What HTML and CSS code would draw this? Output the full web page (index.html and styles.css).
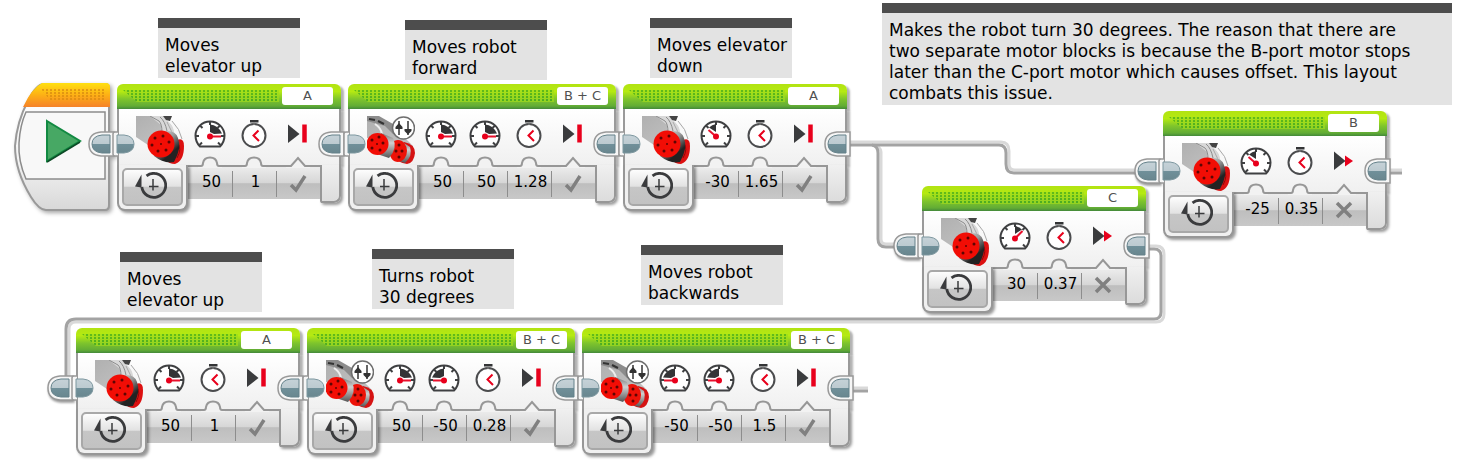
FILE: index.html
```html
<!DOCTYPE html>
<html lang="en">
<head>
<meta charset="utf-8">
<title>Robot program</title>
<link rel="stylesheet" href="styles.css">
</head>
<body>
<svg class="defs" aria-hidden="true">
  <defs>
    <linearGradient id="metal" x1="0" y1="0" x2="1" y2="1"><stop offset="0" stop-color="#b0b0b0"/><stop offset="1" stop-color="#c4c4c4"/></linearGradient>
    <linearGradient id="tube" x1="0" y1="0" x2=".7" y2="1"><stop offset="0" stop-color="#e4e4e4"/><stop offset=".45" stop-color="#9a9a9a"/><stop offset=".8" stop-color="#222"/></linearGradient>
    <linearGradient id="ring" x1="0" y1="0" x2="0" y2="1"><stop offset="0" stop-color="#777"/><stop offset=".4" stop-color="#d0d0d0"/><stop offset="1" stop-color="#555"/></linearGradient>
    <linearGradient id="pill" x1="0" y1="0" x2="0" y2="1"><stop offset="0" stop-color="#c6d2d8"/><stop offset=".5" stop-color="#bccad0"/><stop offset=".5" stop-color="#70909a"/><stop offset="1" stop-color="#6a878f"/></linearGradient>
    <linearGradient id="orange" x1="0" y1="0" x2="0" y2="1"><stop offset="0" stop-color="#ffe010"/><stop offset=".5" stop-color="#fdb015"/><stop offset="1" stop-color="#f5822a"/></linearGradient>
    <linearGradient id="shell" x1="0" y1="0" x2="0" y2="1"><stop offset="0" stop-color="#fff"/><stop offset=".6" stop-color="#f4f4f4"/><stop offset="1" stop-color="#d8d8d8"/></linearGradient>
    <pattern id="dots" width="4" height="3" patternUnits="userSpaceOnUse"><rect width="2" height="2" fill="#d98a10" opacity=".75"/></pattern>
  </defs>
  <symbol id="motor" viewBox="0 0 48 48">
    <path d="M0 0H24L36 10 40 26 24 24 12 29 0 21Z" fill="url(#metal)"/>
    <path d="M14 0H27L37 10 39 22 26 20 25 9Z" fill="#d8d8d8"/>
    <path d="M14 0L23 5Q26 8 26 16M24 1Q29 5 31 15" fill="none" stroke="#8c8c8c"/>
    <path d="M32 4Q39 13 42 24L47 25Q45 13 36 4Z" fill="#f8f8f8"/>
    <path d="M31 6Q35 16 41 23M36 5Q44 13 46 23" fill="none" stroke="#a8a8a8"/>
    <path d="M27 0H36L34 5 30 4Z" fill="#444"/>
    <path d="M41 24Q48 21 48 30Q48 45 39 48Q33 48 30 44Z" fill="#dc1010"/>
    <path d="M42 27Q46 33 41 42" fill="none" stroke="#8c0808"/>
    <path d="M28 15Q40 14 42 22Q46 32 38 46Q28 48 18 40Z" fill="url(#tube)"/>
    <circle cx="25" cy="28" r="13.500" fill="#f20d05"/>
    <g fill="#5c0503"><circle cx="25" cy="28" r="1"/><circle cx="27" cy="20" r="1.500"/><circle cx="19" cy="22" r="1.500"/><circle cx="33" cy="26" r="1.500"/><circle cx="16" cy="29" r="1.500"/><circle cx="22" cy="35" r="1.500"/><circle cx="30" cy="34" r="1.500"/></g>
  </symbol>
  <symbol id="motors" viewBox="0 0 48 48">
    <path d="M0 0H10L30 14 46 30 44 42 20 30 0 22Z" fill="url(#metal)"/>
    <path d="M0 0H12L26 8 34 14 26 18 18 10 0 5Z" fill="#8c8c8c"/>
    <path d="M2 3L8 4M11 5L17 8" stroke="#333" stroke-width="2"/>
    <path d="M8 8Q14 12 15 18" fill="none" stroke="#eee" stroke-width="2"/>
    <path d="M37 26Q48 28 48 37Q47 47 40 48Q30 46 28 42Z" fill="#d51313"/>
    <path d="M34 25L43 31Q46 40 38 47L29 44Z" fill="url(#ring)"/>
    <ellipse cx="31" cy="35" rx="9" ry="11" fill="#ed1208"/>
    <path d="M14 17L26 22Q31 32 22 42L10 38Z" fill="url(#ring)"/>
    <circle cx="10.500" cy="28" r="11" fill="#f20d05"/>
    <g fill="#5c0503"><circle cx="10" cy="28" r="1"/><circle cx="12" cy="21" r="1.500"/><circle cx="5" cy="24" r="1.500"/><circle cx="16" cy="27" r="1.500"/><circle cx="5" cy="32" r="1.500"/><circle cx="13" cy="34" r="1.500"/><circle cx="32" cy="29" r="1.500"/><circle cx="35" cy="35" r="1.500"/><circle cx="29" cy="35" r="1.500"/><circle cx="32" cy="41" r="1.500"/></g>
    <circle cx="36.500" cy="12" r="11" fill="#fff" stroke="#6e6e6e" stroke-width="1.500"/>
    <path d="M32 5V19M41 5V19" stroke="#333" stroke-width="1.500"/>
    <path d="M28.500 11L32 7 35.500 11V13H28.500ZM37.500 13H44.500V15L41 18.500 37.500 15Z" fill="#333"/>
  </symbol>
  <symbol id="dial" viewBox="0 0 32 28">
    <path d="M6 26.500Q1.500 22 1.500 15.500A14.500 14 0 0 1 30.500 15.500Q30.500 22 26 26.500Z" fill="#fff" stroke="#3f4042" stroke-width="2"/>
    <path d="M2 16H5M30 16H27M6 5.500L8.500 8M26 5.500L23.500 8M16 2V5M5.500 25L8 22.500M26.500 25L24 22.500" stroke="#3f4042" stroke-width="2"/>
  </symbol>
  <symbol id="gauge-right" viewBox="0 0 32 28"><use href="#dial"/><path d="M16 4.500Q24 5 28 13.500L20 14 16 12Z" fill="#333436"/><path d="M16 16.500H27" stroke="#e8112d" stroke-width="2"/><circle cx="16" cy="16.500" r="3" fill="#e8001c"/></symbol>
  <symbol id="gauge-left" viewBox="0 0 32 28"><use href="#dial"/><path d="M16 4.500Q8 5 4 13.500L12 14 16 12Z" fill="#333436"/><path d="M16 16.500H5" stroke="#e8112d" stroke-width="2"/><circle cx="16" cy="16.500" r="3" fill="#e8001c"/></symbol>
  <symbol id="gauge-up-left" viewBox="0 0 32 28"><use href="#dial"/><path d="M16 4V12L9 7.500Q12 4.500 16 4Z" fill="#333436"/><path d="M16 16.500L8.500 10" stroke="#e8112d" stroke-width="2"/><circle cx="16" cy="16.500" r="3" fill="#e8001c"/></symbol>
  <symbol id="gauge-up-right" viewBox="0 0 32 28"><use href="#dial"/><path d="M16 4V12L23 7.500Q20 4.500 16 4Z" fill="#333436"/><path d="M16 16.500L23.500 9" stroke="#e8112d" stroke-width="2"/><circle cx="16" cy="16.500" r="3" fill="#e8001c"/></symbol>
  <symbol id="watch" viewBox="0 0 32 28">
    <circle cx="16" cy="15.500" r="11.500" fill="#fff" stroke="#4b4c4e" stroke-width="2"/>
    <path d="M12 1H20.500" stroke="#333436" stroke-width="3"/><path d="M16 2V5" stroke="#888" stroke-width="1"/>
    <path d="M20.500 10.500L15.500 15.500 21 21" fill="none" stroke="#e8001c" stroke-width="2"/>
  </symbol>
  <symbol id="stop" viewBox="0 0 32 28"><path d="M6 4.500L17.500 14 6 23Z" fill="#3a3b3d"/><path d="M22.500 4.500V22.500" stroke="#e8001c" stroke-width="4.500"/></symbol>
  <symbol id="coast" viewBox="0 0 32 28"><path d="M6 4.500L17.500 14 6 23Z" fill="#3a3b3d"/><path d="M17 8.500L25 14 17 19.500Z" fill="#e8001c"/></symbol>
  <symbol id="timer" viewBox="0 0 32 28">
    <path d="M11.500 3.800A12 12 0 1 1 6.800 15" fill="none" stroke="#3a3b3d" stroke-width="2.800"/>
    <path d="M6.500 2.500V15.500L0 14.500Z" fill="#3a3b3d"/>
    <path d="M18 7V18.500M14 14.500H23.500" stroke="#3a3b3d" stroke-width="1.500"/>
  </symbol>
  <symbol id="check" viewBox="0 0 20 20"><path d="M3 12L8 17 17 3" fill="none" stroke="#808080" stroke-width="3.500"/></symbol>
  <symbol id="cross" viewBox="0 0 20 20"><path d="M3 3L17 17M17 3L3 17" stroke="#808080" stroke-width="3.500"/></symbol>
  <symbol id="bump" viewBox="0 0 24 12"><path d="M0 10H3Q5 10 5 7Q6 1.500 12 1.500Q18 1.500 19 7Q19 10 21 10H24V12H0Z" fill="#f2f2f2"/><path d="M0 10H3Q5 10 5 7Q6 1.500 12 1.500Q18 1.500 19 7Q19 10 21 10H24" fill="none" stroke="#979797" stroke-width="2"/></symbol>
  <symbol id="notch" viewBox="0 0 24 12"><path d="M0 10H5L12 2 19 10H24V12H0Z" fill="#f2f2f2"/><path d="M0 10H5L12 2 19 10H24" fill="none" stroke="#979797" stroke-width="2"/></symbol>
  <symbol id="out" viewBox="0 0 28 26">
    <path d="M26 1H13Q1 2 1 13Q1 24 13 25H26Z" fill="#f6f6f6" stroke="#999" stroke-width="1.500"/>
    <path d="M22 4H14Q4 5 4 13Q4 21 14 22H22Z" fill="url(#pill)" stroke="#64818a"/>
  </symbol>
  <symbol id="in" viewBox="0 0 28 26">
    <path d="M6 1H3Q1 1 1 3V23Q1 25 3 25H6" fill="#f6f6f6" stroke="#999" stroke-width="1.500"/>
    <path d="M5 4H12Q22 5 22 13Q22 21 12 22H5Z" fill="url(#pill)" stroke="#7d979f"/>
  </symbol>
</svg>

<main class="canvas">
  <svg class="wires" width="1461" height="463" viewBox="0 0 1461 463" fill="none" aria-hidden="true">
    <g class="wire-light">
      <path d="M874 145Q880 146 881 152V239Q881 244 886 244H898"/>
      <path d="M846 142H1001Q1009 142 1009 151V164Q1009 170 1015 170H1142"/>
      <path d="M1146 246H1156Q1164 246 1164 254V314Q1164 322 1156 322H76Q69 322 69 329V378"/>
      <path d="M1386 170H1402M847 388H868"/>
    </g>
    <g class="wire-dark">
      <path d="M872 145Q878 146 878 153V239Q878 247 886 247H898"/>
      <path d="M846 145H999Q1006 145 1006 153V164Q1006 173 1014 173H1142"/>
      <path d="M1146 249H1154Q1161 249 1161 256V312Q1161 319 1154 319H76Q66 319 66 329V378"/>
      <path d="M1386 173H1402M847 391H868"/>
    </g>
  </svg>

  <p class="note" style="left:158px;top:18px">Moves<br>elevator up</p>
  <p class="note" style="left:405px;top:20px">Moves robot<br>forward</p>
  <p class="note" style="left:650px;top:18px">Moves elevator<br>down</p>
  <p class="note note-wide" style="left:882px;top:3px">Makes the robot turn 30 degrees. The reason that there are two separate motor blocks is because the B-port motor stops later than the C-port motor which causes offset. This layout combats this issue.</p>
  <p class="note" style="left:120px;top:252px">Moves<br>elevator up</p>
  <p class="note" style="left:372px;top:249px">Turns robot<br>30 degrees</p>
  <p class="note" style="left:641px;top:245px">Moves robot<br>backwards</p>

  <div class="chain" style="left:14px;top:83px">
    <div class="start">
      <svg width="97" height="128" viewBox="0 0 97 128" aria-hidden="true">
        <path d="M30 1H91Q95 1 95 5V122Q95 127 91 127H32Q25 127 17 114Q1 88 1 63Q3 38 14 18Q22 1 30 1Z" fill="url(#shell)" stroke="#999" stroke-width="2"/>
        <path d="M28 0H92Q96 0 96 4V24H9Q18 5 28 0Z" fill="url(#orange)"/>
        <path d="M27 6H90V18H36L32 12Z" fill="url(#dots)"/>
        <path d="M12 29H91V96H12Q4 78 5 60Q6 42 12 29Z" fill="#f8f8f8" stroke="#8c8c8c" stroke-width="1.500"/>
        <path d="M33 38L66 58 33 78Z" fill="#47a864" stroke="#128a42" stroke-width="2"/>
        <path d="M33 79L66 59" stroke="#0d4a26" stroke-width="1.500"/>
      </svg>
      <svg class="port port-out" aria-hidden="true"><use href="#out"/></svg>
    </div>
    <section class="block">
      <header class="head"><span class="dots"></span><button class="letter">A</button></header>
      <div class="face"><svg class="motor"><use href="#motor"/></svg><svg class="icon"><use href="#gauge-right"/></svg><svg class="icon"><use href="#watch"/></svg><svg class="icon"><use href="#stop"/></svg></div>
      <div class="base">
        <div class="foot"><button class="mode" aria-label="Mode"><svg><use href="#timer"/></svg></button></div>
        <div class="cell"><svg class="tab"><use href="#bump"/></svg><input aria-label="Power" value="50"></div>
        <div class="cell"><svg class="tab"><use href="#bump"/></svg><input aria-label="Seconds" value="1"></div>
        <div class="cell"><svg class="tab"><use href="#notch"/></svg><button class="brake" aria-label="Brake"><svg><use href="#check"/></svg></button></div>
        <div class="end"></div>
      </div>
      <svg class="port port-in"><use href="#in"/></svg><svg class="port port-out"><use href="#out"/></svg>
    </section>
    <section class="block">
      <header class="head"><span class="dots"></span><button class="letter">B + C</button></header>
      <div class="face"><svg class="motor"><use href="#motors"/></svg><svg class="icon"><use href="#gauge-right"/></svg><svg class="icon"><use href="#gauge-right"/></svg><svg class="icon"><use href="#watch"/></svg><svg class="icon"><use href="#stop"/></svg></div>
      <div class="base">
        <div class="foot"><button class="mode" aria-label="Mode"><svg><use href="#timer"/></svg></button></div>
        <div class="cell"><svg class="tab"><use href="#bump"/></svg><input aria-label="Left power" value="50"></div>
        <div class="cell"><svg class="tab"><use href="#bump"/></svg><input aria-label="Right power" value="50"></div>
        <div class="cell"><svg class="tab"><use href="#bump"/></svg><input aria-label="Seconds" value="1.28"></div>
        <div class="cell"><svg class="tab"><use href="#notch"/></svg><button class="brake" aria-label="Brake"><svg><use href="#check"/></svg></button></div>
        <div class="end"></div>
      </div>
      <svg class="port port-in"><use href="#in"/></svg><svg class="port port-out"><use href="#out"/></svg>
    </section>
    <section class="block">
      <header class="head"><span class="dots"></span><button class="letter">A</button></header>
      <div class="face"><svg class="motor"><use href="#motor"/></svg><svg class="icon"><use href="#gauge-up-left"/></svg><svg class="icon"><use href="#watch"/></svg><svg class="icon"><use href="#stop"/></svg></div>
      <div class="base">
        <div class="foot"><button class="mode" aria-label="Mode"><svg><use href="#timer"/></svg></button></div>
        <div class="cell"><svg class="tab"><use href="#bump"/></svg><input aria-label="Power" value="-30"></div>
        <div class="cell"><svg class="tab"><use href="#bump"/></svg><input aria-label="Seconds" value="1.65"></div>
        <div class="cell"><svg class="tab"><use href="#notch"/></svg><button class="brake" aria-label="Brake"><svg><use href="#check"/></svg></button></div>
        <div class="end"></div>
      </div>
      <svg class="port port-in"><use href="#in"/></svg><svg class="port port-out"><use href="#out"/></svg>
    </section>
  </div>

  <div class="chain" style="left:1163px;top:111px">
    <section class="block">
      <header class="head"><span class="dots"></span><button class="letter">B</button></header>
      <div class="face"><svg class="motor"><use href="#motor"/></svg><svg class="icon"><use href="#gauge-up-left"/></svg><svg class="icon"><use href="#watch"/></svg><svg class="icon"><use href="#coast"/></svg></div>
      <div class="base">
        <div class="foot"><button class="mode" aria-label="Mode"><svg><use href="#timer"/></svg></button></div>
        <div class="cell"><svg class="tab"><use href="#bump"/></svg><input aria-label="Power" value="-25"></div>
        <div class="cell"><svg class="tab"><use href="#bump"/></svg><input aria-label="Seconds" value="0.35"></div>
        <div class="cell"><svg class="tab"><use href="#notch"/></svg><button class="brake" aria-label="Brake"><svg><use href="#cross"/></svg></button></div>
        <div class="end"></div>
      </div>
      <svg class="port port-plug"><use href="#out"/></svg><svg class="port port-in"><use href="#in"/></svg><svg class="port port-out"><use href="#out"/></svg>
    </section>
  </div>

  <div class="chain" style="left:922px;top:186px">
    <section class="block">
      <header class="head"><span class="dots"></span><button class="letter">C</button></header>
      <div class="face"><svg class="motor"><use href="#motor"/></svg><svg class="icon"><use href="#gauge-up-right"/></svg><svg class="icon"><use href="#watch"/></svg><svg class="icon"><use href="#coast"/></svg></div>
      <div class="base">
        <div class="foot"><button class="mode" aria-label="Mode"><svg><use href="#timer"/></svg></button></div>
        <div class="cell"><svg class="tab"><use href="#bump"/></svg><input aria-label="Power" value="30"></div>
        <div class="cell"><svg class="tab"><use href="#bump"/></svg><input aria-label="Seconds" value="0.37"></div>
        <div class="cell"><svg class="tab"><use href="#notch"/></svg><button class="brake" aria-label="Brake"><svg><use href="#cross"/></svg></button></div>
        <div class="end"></div>
      </div>
      <svg class="port port-plug"><use href="#out"/></svg><svg class="port port-in"><use href="#in"/></svg><svg class="port port-out"><use href="#out"/></svg>
    </section>
  </div>

  <div class="chain" style="left:76px;top:328px">
    <section class="block">
      <header class="head"><span class="dots"></span><button class="letter">A</button></header>
      <div class="face"><svg class="motor"><use href="#motor"/></svg><svg class="icon"><use href="#gauge-right"/></svg><svg class="icon"><use href="#watch"/></svg><svg class="icon"><use href="#stop"/></svg></div>
      <div class="base">
        <div class="foot"><button class="mode" aria-label="Mode"><svg><use href="#timer"/></svg></button></div>
        <div class="cell"><svg class="tab"><use href="#bump"/></svg><input aria-label="Power" value="50"></div>
        <div class="cell"><svg class="tab"><use href="#bump"/></svg><input aria-label="Seconds" value="1"></div>
        <div class="cell"><svg class="tab"><use href="#notch"/></svg><button class="brake" aria-label="Brake"><svg><use href="#check"/></svg></button></div>
        <div class="end"></div>
      </div>
      <svg class="port port-plug"><use href="#out"/></svg><svg class="port port-in"><use href="#in"/></svg><svg class="port port-out"><use href="#out"/></svg>
    </section>
    <section class="block">
      <header class="head"><span class="dots"></span><button class="letter">B + C</button></header>
      <div class="face"><svg class="motor"><use href="#motors"/></svg><svg class="icon"><use href="#gauge-right"/></svg><svg class="icon"><use href="#gauge-left"/></svg><svg class="icon"><use href="#watch"/></svg><svg class="icon"><use href="#stop"/></svg></div>
      <div class="base">
        <div class="foot"><button class="mode" aria-label="Mode"><svg><use href="#timer"/></svg></button></div>
        <div class="cell"><svg class="tab"><use href="#bump"/></svg><input aria-label="Left power" value="50"></div>
        <div class="cell"><svg class="tab"><use href="#bump"/></svg><input aria-label="Right power" value="-50"></div>
        <div class="cell"><svg class="tab"><use href="#bump"/></svg><input aria-label="Seconds" value="0.28"></div>
        <div class="cell"><svg class="tab"><use href="#notch"/></svg><button class="brake" aria-label="Brake"><svg><use href="#check"/></svg></button></div>
        <div class="end"></div>
      </div>
      <svg class="port port-in"><use href="#in"/></svg><svg class="port port-out"><use href="#out"/></svg>
    </section>
    <section class="block">
      <header class="head"><span class="dots"></span><button class="letter">B + C</button></header>
      <div class="face"><svg class="motor"><use href="#motors"/></svg><svg class="icon"><use href="#gauge-left"/></svg><svg class="icon"><use href="#gauge-left"/></svg><svg class="icon"><use href="#watch"/></svg><svg class="icon"><use href="#stop"/></svg></div>
      <div class="base">
        <div class="foot"><button class="mode" aria-label="Mode"><svg><use href="#timer"/></svg></button></div>
        <div class="cell"><svg class="tab"><use href="#bump"/></svg><input aria-label="Left power" value="-50"></div>
        <div class="cell"><svg class="tab"><use href="#bump"/></svg><input aria-label="Right power" value="-50"></div>
        <div class="cell"><svg class="tab"><use href="#bump"/></svg><input aria-label="Seconds" value="1.5"></div>
        <div class="cell"><svg class="tab"><use href="#notch"/></svg><button class="brake" aria-label="Brake"><svg><use href="#check"/></svg></button></div>
        <div class="end"></div>
      </div>
      <svg class="port port-in"><use href="#in"/></svg><svg class="port port-out"><use href="#out"/></svg>
    </section>
  </div>
</main>
</body>
</html>
```
FILE: styles.css
```css
* { box-sizing: border-box; }
body {
  margin: 0;
  background: #fff;
  color: #000;
  font-family: "DejaVu Sans", sans-serif;
  overflow: hidden;
}
svg { display: block; }
button, input { font: inherit; color: inherit; margin: 0; padding: 0; border: 0; background: none; }
.defs { position: absolute; width: 0; height: 0; }
.canvas { position: relative; min-height: 100vh; }

/* wires between blocks */
.wires { position: absolute; left: 0; top: 0; }
.wire-light { stroke: #d9d9d9; stroke-width: 3; }
.wire-dark { stroke: #a3a3a3; stroke-width: 3; }

/* comments on the canvas */
.note {
  position: absolute;
  margin: 0;
  width: 142px;
  padding: 7px 0 1px 7px;
  border-top: 10px solid #4d4d4d;
  background: #e3e3e3;
  font-size: 17px;
  line-height: 21px;
  white-space: nowrap;
}
.note-wide { width: 570px; padding-right: 40px; white-space: normal; }

/* a run of connected blocks */
.chain { position: absolute; display: flex; align-items: flex-start; gap: 7px; }
.start { position: relative; margin-right: -1px; filter: drop-shadow(2px 2px 2px rgba(0, 0, 0, .35)); }
.block { position: relative; }
.start ~ .block { margin-top: 1px; }

.head {
  display: flex;
  height: 25px;
  padding: 3px 8px 3px 6px;
  gap: 3px;
  border-radius: 6px 6px 0 0;
  background: linear-gradient(#b2e312, #b5ea12 30%, #7fc52c 60%, #62ac35 88%, #43893a);
  box-shadow: 3px 2px 2px rgba(0, 0, 0, .3);
}
.dots {
  flex: 1;
  height: 12px;
  margin-top: 3px;
  background: repeating-linear-gradient(90deg, transparent 0 2px, #a0dc1c 2px 4px), repeating-linear-gradient(#3da51e 0 2px, #a0dc1c 2px 3px);
  opacity: .7;
  clip-path: polygon(0 0, 100% 0, 100% 100%, 14px 100%);
}
.letter {
  width: 51px;
  height: 18px;
  border-radius: 3px;
  background: #fff;
  color: #505050;
  font-size: 13px;
  line-height: 18px;
}

.face {
  position: relative;
  display: flex;
  height: 56px;
  padding: 7px 19px 0 17px;
  border: solid #9a9a9a;
  border-width: 0 2px;
  background: linear-gradient(#fff, #f0f0f0);
  box-shadow: 3px 2px 2px rgba(0, 0, 0, .3);
}
.motor { width: 48px; height: 48px; margin-right: 4px; }
.icon { width: 32px; height: 28px; margin: 4px 6px 0; overflow: visible; }

.base { position: relative; display: flex; align-items: flex-start; }
.foot {
  width: 71px;
  height: 46px;
  padding: 3px;
  border: 2px solid #979797;
  border-top: 0;
  border-radius: 0 0 8px 8px;
  background: #f0f0f0;
  box-shadow: 2px 2px 3px rgba(0, 0, 0, .4);
  z-index: 1;
}
.mode {
  width: 61px;
  height: 38px;
  display: grid;
  place-items: center;
  padding: 0 4px 2px 0;
  border: 2px solid #a8a8a8;
  border-radius: 5px;
  background: linear-gradient(#fdfdfd, #e2e2e2 48%, #c6c6c6 50%, #c2c2c2);
}
.mode svg { width: 32px; height: 28px; }
.cell {
  position: relative;
  width: 44px;
  height: 34px;
  padding-top: 2px;
  background: linear-gradient(#ececec, #d6d6d6 50%, #bebebe 52%, #c8c8c8);
  border-top: 2px solid #979797;
}
.cell + .cell::before {
  content: "";
  position: absolute;
  left: 0;
  top: 4px;
  bottom: 2px;
  width: 1px;
  background: #8d8d8d;
}
.tab { position: absolute; left: 10px; top: -11px; width: 24px; height: 12px; }
.cell input { width: 44px; height: 26px; padding-left: 3px; text-align: center; font-size: 15px; }
.brake { width: 44px; height: 26px; display: grid; place-items: center; padding-top: 2px; }
.brake svg { width: 20px; height: 20px; }
.end {
  width: 21px;
  height: 38px;
  border: 2px solid #979797;
  border-top: 0;
  border-radius: 0 0 7px 2px;
  background: linear-gradient(#f0f0f0, #dcdcdc);
  box-shadow: 2px 2px 3px rgba(0, 0, 0, .4);
}

/* connectors lie over the block edges */
.port { position: absolute; top: 47px; width: 28px; height: 26px; z-index: 2; }
.port-in { left: -5px; }
.port-out { right: -5px; }
.port-plug { left: -29px; filter: drop-shadow(1px 2px 1px rgba(0, 0, 0, .4)); }
.start .port-out { top: 48px; }
```
